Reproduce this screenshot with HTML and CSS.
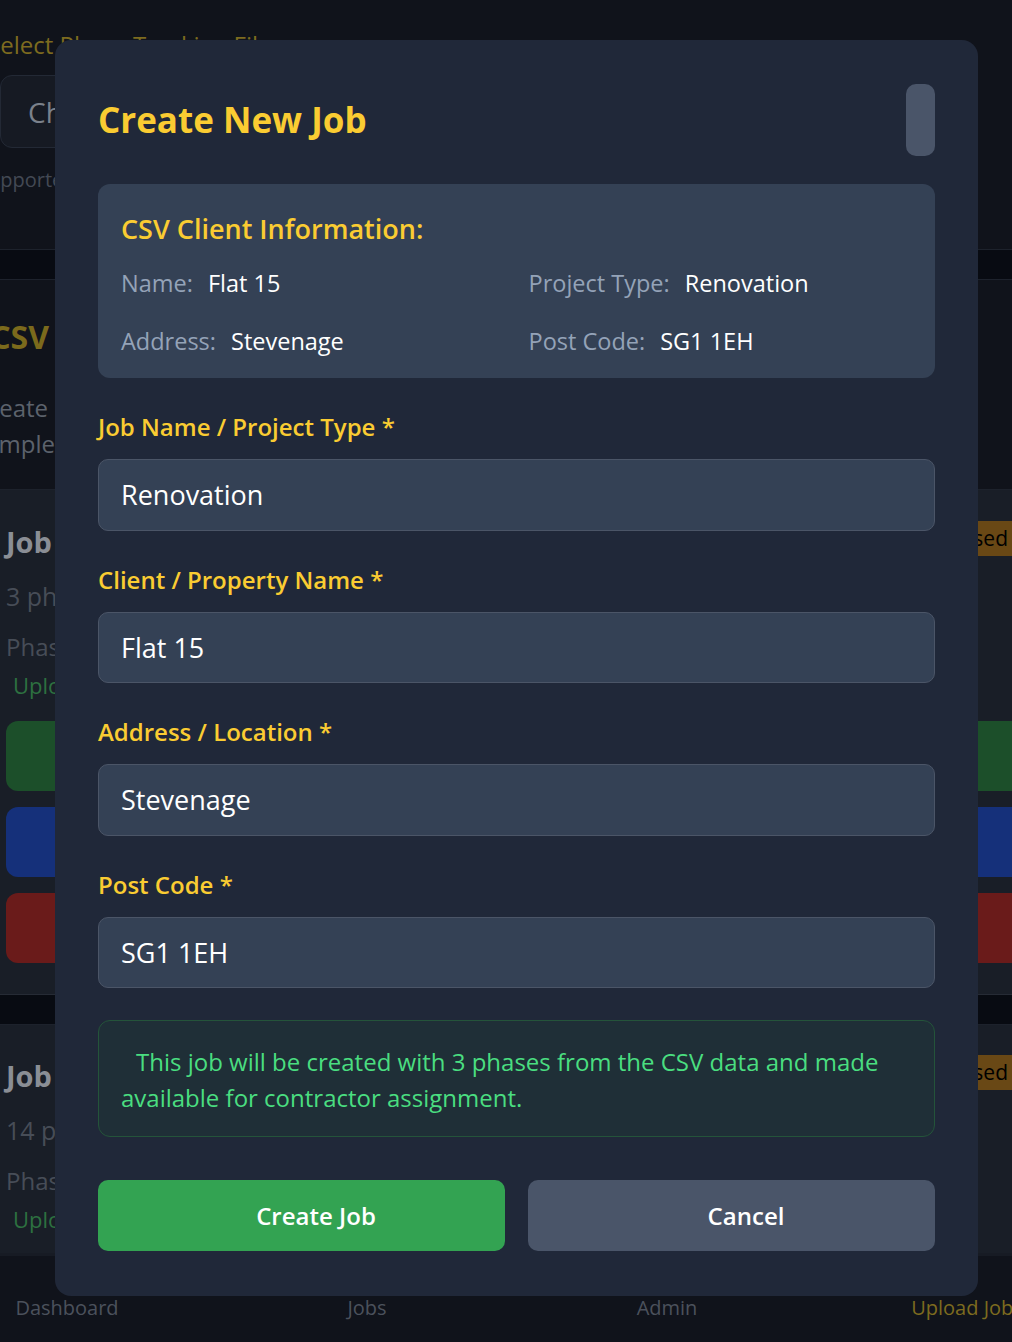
FILE: index.html
```html
<!DOCTYPE html>
<html lang="en">
<head>
<meta charset="utf-8">
<title>Create New Job</title>
<link rel="stylesheet" href="styles.css">
</head>
<body>
<div class="page">
  <section class="upload">
    <div class="upload-label">Select Phase Tracking File</div>
    <div class="file-input"><span>Choose File</span></div>
    <div class="upload-hint">Supported format: .csv</div>
  </section>
  <div class="band"></div>
  <section class="csv-intro">
    <div class="clip clip-title"><span>Upload CSV</span></div>
    <div class="clip clip-line1"><span>Upload a spreadsheet to create</span></div>
    <div class="clip clip-line2"><span>every phase, for example</span></div>
  </section>
  <article class="job-card">
    <div class="job-head">
      <div class="job-title">Job Flat 15</div>
      <div class="badge">Unprocessed</div>
    </div>
    <div class="job-meta">3 phases</div>
    <div class="job-phases">Phases: Strip out, First fix, Second fix</div>
    <div class="job-upl">Uploaded from CSV</div>
    <div class="job-actions">
      <div class="act act-green"></div>
      <div class="act act-blue"></div>
      <div class="act act-red"></div>
    </div>
  </article>
  <div class="band"></div>
  <article class="job-card job-card-short">
    <div class="job-head">
      <div class="job-title">Job Flat 9</div>
      <div class="badge">Unprocessed</div>
    </div>
    <div class="job-meta">14 phases</div>
    <div class="job-phases">Phases: Strip out, First fix</div>
    <div class="job-upl">Uploaded from CSV</div>
  </article>
  <nav class="bottom-nav">
    <span>Dashboard</span>
    <span>Jobs</span>
    <span>Admin</span>
    <span class="nav-active">Upload Jobs</span>
  </nav>
</div>

<div class="modal">
  <div class="modal-head">
    <h2 class="modal-title">Create New Job</h2>
    <div class="modal-thumb"></div>
  </div>

  <div class="info-box">
    <h3 class="info-title">CSV Client Information:</h3>
    <div class="info-grid">
      <div class="info-item"><span class="info-k">Name:</span><span class="info-v">Flat 15</span></div>
      <div class="info-item"><span class="info-k">Project Type:</span><span class="info-v">Renovation</span></div>
      <div class="info-item"><span class="info-k">Address:</span><span class="info-v">Stevenage</span></div>
      <div class="info-item"><span class="info-k">Post Code:</span><span class="info-v">SG1 1EH</span></div>
    </div>
  </div>

  <label class="field-label">Job Name / Project Type *</label>
  <div class="field">Renovation</div>

  <label class="field-label">Client / Property Name *</label>
  <div class="field">Flat 15</div>

  <label class="field-label">Address / Location *</label>
  <div class="field">Stevenage</div>

  <label class="field-label">Post Code *</label>
  <div class="field">SG1 1EH</div>

  <div class="note">This job will be created with 3 phases from the CSV data and made available for contractor assignment.</div>

  <div class="modal-actions">
    <button class="btn btn-create">Create Job</button>
    <button class="btn btn-cancel">Cancel</button>
  </div>
</div>
</body>
</html>
```
FILE: styles.css
```css
html, body {
  margin: 0;
  padding: 0;
}
body {
  background: #10131b;
  font-family: "Open Sans", "Noto Sans", sans-serif;
  overflow: hidden;
  width: 1012px;
  height: 1342px;
}
.page {
  width: 1012px;
}

/* ---------- background page ---------- */
.upload {
  height: 250px;
  box-sizing: border-box;
  padding-top: 28px;
  background: #10131b;
  border-bottom: 1px solid #1d222c;
}
.upload-label {
  margin-left: -13px;
  font-size: 24px;
  line-height: 34px;
  color: #7d6b1f;
  white-space: nowrap;
}
.file-input {
  margin-top: 13px;
  height: 73px;
  box-sizing: border-box;
  border: 1px solid #232935;
  border-radius: 12px;
  background: #161a23;
  display: flex;
  align-items: center;
  padding-left: 27px;
  width: 400px;
}
.file-input span {
  font-size: 28px;
  color: #7b818b;
}
.upload-hint {
  margin-top: 18px;
  margin-left: -23px;
  font-size: 20px;
  color: #434954;
  white-space: nowrap;
}
.band {
  height: 29px;
  background: #080b12;
  border-bottom: 1px solid #1d222c;
}
.csv-intro {
  height: 210px;
  box-sizing: border-box;
  padding-top: 36px;
  background: #10131b;
  border-bottom: 1px solid #1d222c;
}
.clip {
  display: flex;
  justify-content: flex-end;
  white-space: nowrap;
}
.clip-title {
  width: 49px;
  font-size: 32px;
  font-weight: 700;
  line-height: 42px;
  color: #7b6a1c;
}
.clip-line1 {
  margin-top: 32px;
  width: 48px;
  font-size: 24px;
  line-height: 36px;
  color: #5c626c;
}
.clip-line2 {
  width: 55px;
  font-size: 24px;
  line-height: 36px;
  color: #5c626c;
}
.job-card {
  height: 505px;
  box-sizing: border-box;
  background: #191e27;
  padding: 30px 0 0 6px;
  border-bottom: 1px solid #262b35;
}
.job-card-short {
  height: 228px;
  padding-top: 29px;
  border-bottom: none;
}
.job-head {
  display: flex;
  justify-content: space-between;
  align-items: flex-start;
  margin-right: -30px;
}
.job-title {
  font-size: 29px;
  font-weight: 700;
  color: #8a8e95;
  line-height: 44px;
}
.badge {
  margin-top: 1px;
  background: #694815;
  color: #000;
  font-size: 21px;
  line-height: 35px;
  padding: 0 34px 0 10px;
}
.job-meta {
  margin-top: 14px;
  font-size: 25px;
  line-height: 36px;
  color: #474d57;
}
.job-phases {
  margin-top: 15px;
  font-size: 24px;
  line-height: 36px;
  color: #474d57;
  white-space: nowrap;
}
.job-upl {
  margin-top: 3px;
  margin-left: 7px;
  font-size: 22px;
  line-height: 34px;
  color: #2d7040;
  white-space: nowrap;
}
.job-actions {
  margin-top: 19px;
  display: flex;
  flex-direction: column;
  gap: 16px;
  margin-right: -40px;
}
.act {
  height: 70px;
  border-radius: 12px;
}
.act-green { background: #1c4f2a; }
.act-blue { background: #15307a; }
.act-red { background: #6a1b1a; }

.bottom-nav {
  height: 90px;
  box-sizing: border-box;
  border-top: 3px solid #171b24;
  background: #10131b;
  display: grid;
  grid-template-columns: repeat(4, 300px);
  margin-left: -83px;
  padding-top: 38px;
  font-size: 20px;
  color: #4b515c;
  text-align: center;
  white-space: nowrap;
}
.bottom-nav .nav-active {
  color: #7d6b1f;
}

/* ---------- modal ---------- */
.modal {
  position: fixed;
  left: 55px;
  top: 40px;
  width: 923px;
  height: 1256px;
  box-sizing: border-box;
  padding: 44px 43px 45px 43px;
  background: #202839;
  border-radius: 16px;
  display: flex;
  flex-direction: column;
}
.modal-head {
  display: flex;
  justify-content: space-between;
  align-items: center;
}
.modal-title {
  margin: 0;
  font-size: 35px;
  font-weight: 700;
  color: #facc32;
  line-height: 44px;
}
.modal-thumb {
  width: 29px;
  height: 72px;
  border-radius: 10px;
  background: #4a5569;
}
.info-box {
  margin-top: 28px;
  background: #344155;
  border-radius: 12px;
  padding: 28px 23px 20px 23px;
}
.info-title {
  margin: 0;
  font-size: 27px;
  font-weight: 600;
  line-height: 34px;
  color: #facc32;
}
.info-grid {
  margin-top: 20px;
  display: grid;
  grid-template-columns: 1fr 1fr;
  column-gap: 24px;
  row-gap: 24px;
}
.info-item {
  font-size: 23.5px;
  line-height: 34px;
  white-space: nowrap;
}
.info-k {
  color: #94a3b8;
  margin-right: 15px;
}
.info-v {
  color: #ffffff;
}
.field-label {
  display: block;
  margin-top: 34px;
  font-size: 24px;
  font-weight: 600;
  line-height: 30px;
  color: #facc32;
}
.field {
  margin-top: 17px;
  height: 73px;
  box-sizing: border-box;
  background: #344155;
  border: 1px solid #4b5567;
  border-radius: 10px;
  display: flex;
  align-items: center;
  padding-left: 22px;
  font-size: 27px;
  color: #ffffff;
}
.note {
  margin-top: 32px;
  box-sizing: border-box;
  background: #1f2f37;
  border: 1px solid #24543a;
  border-radius: 12px;
  padding: 23px 22px 20px 22px;
  font-size: 24px;
  line-height: 36px;
  text-indent: 15px;
  color: #4ade80;
}
.modal-actions {
  margin-top: 43px;
  display: grid;
  grid-template-columns: 1fr 1fr;
  column-gap: 23px;
}
.btn {
  height: 71px;
  border: none;
  border-radius: 10px;
  padding: 0 0 0 29px;
  font-family: inherit;
  font-size: 24px;
  font-weight: 600;
  color: #ffffff;
}
.btn-create { background: #33a352; }
.btn-cancel { background: #4a5569; }
```
